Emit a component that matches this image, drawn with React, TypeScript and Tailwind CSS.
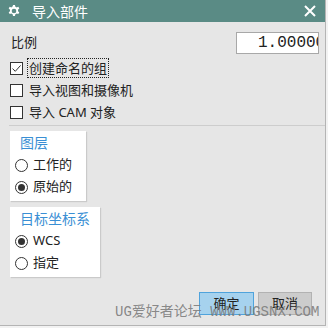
import type { ReactNode } from "react";

const font = { fontFamily: '"Noto Sans", "Noto Sans CJK SC", sans-serif' };

function Gear() {
  return (
    <svg width="14" height="14" viewBox="0 0 24 24" fill="none">
      <path
        d="M10.3 1.5h3.4l.6 3a8 8 0 0 1 2.2 1.3l2.9-1 1.7 3-2.3 2a8 8 0 0 1 0 2.5l2.3 2-1.7 3-2.9-1a8 8 0 0 1-2.2 1.3l-.6 3h-3.4l-.6-3a8 8 0 0 1-2.2-1.3l-2.9 1-1.7-3 2.3-2a8 8 0 0 1 0-2.5l-2.3-2 1.7-3 2.9 1a8 8 0 0 1 2.2-1.3z"
        fill="white"
      />
      <circle cx="12" cy="12" r="4" fill="#5a8b85" />
    </svg>
  );
}

function Checkbox({ checked }: { checked?: boolean }) {
  return (
    <span className="flex h-[13px] w-[13px] shrink-0 items-center justify-center border border-[#333] bg-white">
      {checked ? (
        <svg width="11" height="11" viewBox="0 0 11 11">
          <path d="M1.5 5.6 4.3 8.3 9.6 2.4" fill="none" stroke="#333" strokeWidth="1" />
        </svg>
      ) : null}
    </span>
  );
}

function Radio({ checked }: { checked?: boolean }) {
  return (
    <span className="flex h-[13px] w-[13px] shrink-0 items-center justify-center rounded-full border border-[#333] bg-white">
      {checked ? <span className="h-[7px] w-[7px] rounded-full bg-[#333]" /> : null}
    </span>
  );
}

function CheckRow({ label, checked, focus }: { label: string; checked?: boolean; focus?: boolean }) {
  return (
    <div className="flex h-[22px] items-center pl-[10px]">
      <Checkbox checked={checked} />
      <span
        className={
          focus
            ? "ml-[4px] border border-dotted border-[#222] px-[1px] leading-[18px]"
            : "ml-[6px] leading-[18px]"
        }
      >
        {label}
      </span>
    </div>
  );
}

function Group({ title, width, children }: { title: string; width: string; children: ReactNode }) {
  return (
    <div className={`ml-[10px] bg-white pb-[3px] shadow-[1px_1px_1px_rgba(0,0,0,0.12)] ${width}`}>
      <div className="flex h-[23px] items-center pl-[10px] text-[14px] text-[#3a8fd4]">{title}</div>
      {children}
    </div>
  );
}

function RadioRow({ label, checked }: { label: string; checked?: boolean }) {
  return (
    <div className="flex h-[22px] items-center pl-[5px]">
      <Radio checked={checked} />
      <span className="ml-[5px]">{label}</span>
    </div>
  );
}

export default function App() {
  return (
    <div className="h-[328px] w-[328px] bg-[#f2f2f2] text-[13px] text-[#222]" style={font}>
      <div className="relative flex h-[326px] w-[326px] flex-col border-r border-b border-[#b4b4b4] bg-[#e6e6e6]">
        <header className="flex h-[22px] shrink-0 items-center bg-[#5a8b85] pl-[7px] pr-[9px] text-white">
          <Gear />
          <span className="ml-[11px] text-[14px]">导入部件</span>
          <svg className="ml-auto" width="12" height="12" viewBox="0 0 12 12">
            <path d="M1 1 11 11M11 1 1 11" stroke="white" strokeWidth="2" />
          </svg>
        </header>

        <div className="mt-[10px] flex h-[22px] items-center justify-between pl-[11px] pr-[6px]">
          <span>比例</span>
          <div className="h-[22px] w-[83px] overflow-hidden whitespace-nowrap border border-[#a8a8a8] bg-white pl-[21px] text-[16px] leading-[20px] text-[#222] [font-family:'Liberation_Mono',monospace]">
            1.00000
          </div>
        </div>

        <div className="mt-[3px] flex flex-col">
          <CheckRow label="创建命名的组" checked focus />
          <CheckRow label="导入视图和摄像机" />
          <CheckRow label="导入 CAM 对象" />
        </div>

        <div className="ml-[9px] mt-[2px] h-px bg-[#cdcdcd]" />

        <div className="mt-[5px]">
          <Group title="图层" width="w-[76px]">
            <RadioRow label="工作的" />
            <RadioRow label="原始的" checked />
          </Group>
        </div>

        <div className="mt-[6px]">
          <Group title="目标坐标系" width="w-[90px]">
            <RadioRow label="WCS" checked />
            <RadioRow label="指定" />
          </Group>
        </div>

        <div className="mt-auto mb-[10px] flex justify-end gap-[4px] pr-[13px]">
          <button className="h-[23px] w-[55px] border border-[#4fa3dc] bg-[#a6d2ee] text-[13px] text-[#222]">
            确定
          </button>
          <button className="h-[23px] w-[54px] border border-[#b2b2b2] bg-[#cccccc] text-[13px] text-[#222]">
            取消
          </button>
        </div>

        <div className="pointer-events-none absolute left-[115px] top-[302px] whitespace-nowrap text-[14px] text-[#7c7c7c]/90 [font-family:'Liberation_Mono','Noto_Sans_CJK_SC',monospace]">
          UG爱好者论坛 WWW.UGSNX.COM
        </div>
      </div>
    </div>
  );
}
